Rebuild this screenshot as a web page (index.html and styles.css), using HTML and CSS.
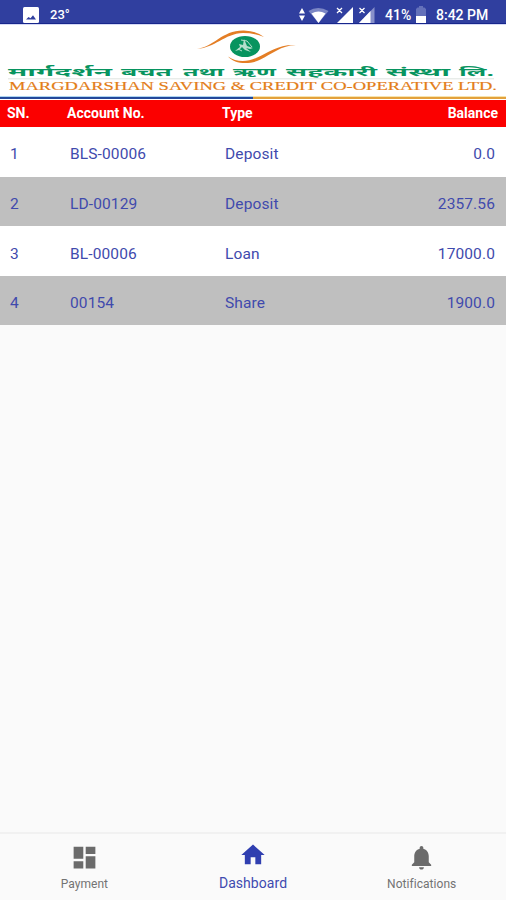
FILE: index.html
```html
<!DOCTYPE html>
<html lang="en">
<head>
<meta charset="utf-8">
<title>Accounts</title>
<link rel="stylesheet" href="styles.css">
</head>
<body>
<header class="status">
  <svg class="st-photo" viewBox="0 0 16 16" width="16" height="16"><rect width="16" height="16" rx="1.5" fill="#fff"/><path d="M3 12.500l2.500-2.500 2 1.200 2.500-3 3 4.300z" fill="#303f9f"/></svg>
  <span class="temp">23°</span>
  <svg class="st-icons" viewBox="0 0 78 18" width="78" height="18">
    <path d="M0 7.500L3 2l3 5.500zM0 9.500h6L3 15z" fill="#fff"/>
    <path d="M9.500 5q9.500-6 20 0L19.500 17z" fill="#7c87c5"/>
    <path d="M12.500 7.500q7-4 14 0L19.500 17z" fill="#fff"/>
    <path d="M54 1v16H38z" fill="#fff"/>
    <path d="M38 2l5 5M43 2l-5 5M60.500 2l5 5M65.500 2l-5 5" stroke="#fff" stroke-width="1.300"/>
    <path d="M75.500 1v16H60z" fill="#8790ca"/><path d="M71.500 5v12H60z" fill="#fff"/>
  </svg>
  <span class="pct">41%</span>
  <svg class="st-bat" viewBox="0 0 10 18" width="10" height="18"><path d="M3 0h4v1.500h1.500L10 3v7H0V3l1.500-1.500H3z" fill="#6471ba"/><path d="M0 10h10v7H0z" fill="#fff"/></svg>
  <span class="clock">8:42 PM</span>
</header>

<div class="brand">
  <svg viewBox="0 0 506 72" width="506" height="72">
    <g class="swoosh">
      <path d="M197 24.800C214 23 222 6 244 6.500Q257 7 264 13Q254 9 243 9C224 9.800 215 24 197 24.800z"/>
      <path d="M228 32.500C236 38 246 38.500 256 34C269 28 279 20 296 21C281 21.500 272 30 260 35.800C248 41.500 234 39.500 228 32.500z"/>
    </g>
    <ellipse cx="245" cy="22.500" rx="15" ry="10.500" fill="#07945f"/>
    <path d="M235 27l5-4-1-3 4 1 1-6 3 7 6 2-3 1-4-1 5 4-6-2-3-3-3 3z" fill="#b5dfcc"/>
    <path d="M241 16l6 1 5 6M238 25l4 2" fill="none" stroke="#b5dfcc"/>
    <g class="nepali" transform="translate(0 51.800) scale(1 .64)">
      <text x="8" textLength="104" lengthAdjust="spacingAndGlyphs">मार्गदर्शन</text>
      <text x="121" textLength="51" lengthAdjust="spacingAndGlyphs">बचत</text>
      <text x="183" textLength="41" lengthAdjust="spacingAndGlyphs">तथा</text>
      <text x="233" textLength="43" lengthAdjust="spacingAndGlyphs">ऋण</text>
      <text x="286" textLength="91" lengthAdjust="spacingAndGlyphs">सहकारी</text>
      <text x="386" textLength="64" lengthAdjust="spacingAndGlyphs">संस्था</text>
      <text x="459" textLength="35" lengthAdjust="spacingAndGlyphs">लि.</text>
    </g>
    <path d="M8 54.800h486" stroke="#d5ddd8" stroke-width=".8"/>
    <text class="english" transform="translate(9 65.800) scale(1 .74)" textLength="488" lengthAdjust="spacingAndGlyphs">MARGDARSHAN SAVING &amp; CREDIT CO-OPERATIVE LTD.</text>
  </svg>
</div>
<div class="tabs"><i class="tab-blue"></i><i class="tab-gold"></i></div>

<main>
  <div class="row head"><span>SN.</span><span>Account No.</span><span>Type</span><span class="num">Balance</span></div>
  <div class="row first"><span>1</span><span>BLS-00006</span><span>Deposit</span><span class="num">0.0</span></div>
  <div class="row alt"><span>2</span><span>LD-00129</span><span>Deposit</span><span class="num">2357.56</span></div>
  <div class="row"><span>3</span><span>BL-00006</span><span>Loan</span><span class="num">17000.0</span></div>
  <div class="row alt"><span>4</span><span>00154</span><span>Share</span><span class="num">1900.0</span></div>
</main>

<nav>
  <div class="item"><svg viewBox="0 0 24 24" width="29" height="29"><path d="M3 13h8V3H3v10zm0 8h8v-6H3v6zm10 0h8V11h-8v10zm0-18v6h8V3h-8z"/></svg><span>Payment</span></div>
  <div class="item active"><svg viewBox="0 0 24 24" width="28" height="28"><path d="M10 20v-6h4v6h5v-8h3L12 3 2 12h3v8z"/></svg><span>Dashboard</span></div>
  <div class="item"><svg viewBox="0 0 24 24" width="29" height="29"><path d="M12 22c1.100 0 2-.9 2-2h-4c0 1.100.9 2 2 2zm6-6v-5c0-3.070-1.630-5.640-4.500-6.320V4c0-.83-.67-1.500-1.500-1.500s-1.500.67-1.500 1.500v.68C7.640 5.360 6 7.920 6 11v5l-2 2v1h16v-1l-2-2z"/></svg><span>Notifications</span></div>
</nav>
</body>
</html>
```
FILE: styles.css
```css
* { box-sizing: border-box; }
body {
  margin: 0;
  width: 506px;
  height: 900px;
  display: flex;
  flex-direction: column;
  overflow: hidden;
  background: #fafafa;
  font-family: Roboto, "Liberation Sans", sans-serif;
}
svg { display: block; flex: none; }

.status {
  height: 24px;
  padding: 6px 17px 0 23px;
  display: flex;
  background: #303f9f;
  border-bottom: 1px solid #17268c;
  color: #fff;
  font-size: 14px;
  font-weight: 500;
  line-height: 18px;
  white-space: nowrap;
}
.st-photo { margin-top: 1px; }
.temp { margin-left: 11px; font-size: 13px; }
.st-icons { margin-left: auto; }
.pct { width: 27px; margin-left: 8px; }
.st-bat { margin-left: 4px; }
.clock { width: 53px; margin-left: 10px; }

.brand { height: 72px; background: #fff; border-top: 1px solid #d5d9f5; }
.brand svg { margin-top: -1px; }
.swoosh { fill: #e47e25; }
.nepali { font: 700 18px "Noto Sans", "Noto Sans Devanagari", sans-serif; fill: #07945f; }
.english { font: 400 17px "Liberation Serif", serif; fill: #e37d18; stroke: #e37d18; stroke-width: .25; }

.tabs { height: 4px; display: flex; background: #fff; }
.tabs i { flex: 1; border-top: 1px solid; border-bottom: 1px solid #fff; }
.tab-blue { background: #23479a; border-top-color: #add5f2 !important; }
.tab-gold { background: #e3a13c; border-top-color: #f8e3ad !important; }

.row {
  display: grid;
  grid-template-columns: 60px 155px 1fr 120px;
  align-items: center;
  height: 50px;
  padding: 5px 11px 0 10px;
  background: #fff;
  color: #3f4aad;
  font-size: 15.5px;
  letter-spacing: .12px;
}
.first { padding-top: 4px; }
.alt { height: 49px; background: #bfbfbf; }
.num { text-align: right; }
.head {
  height: 27px;
  padding: 0 8px 2px 7px;
  background: #fb0000;
  color: #fff;
  font-size: 14px;
  font-weight: 700;
  letter-spacing: 0;
}

nav {
  height: 68px;
  margin-top: auto;
  display: flex;
  border-top: 2px solid #f1f1f1;
}
.item {
  flex: 1;
  display: flex;
  flex-direction: column;
  align-items: center;
  padding-top: 9px;
  color: #737373;
  font-size: 12px;
  line-height: 16px;
  letter-spacing: .05px;
}
.item svg { fill: #6b6b6b; }
.item span { margin-top: 4px; }
.active { color: #3f4ab0; font-size: 14px; padding-top: 7px; }
.active svg { fill: #303fb0; }
.active span { margin-top: 6px; }
```
